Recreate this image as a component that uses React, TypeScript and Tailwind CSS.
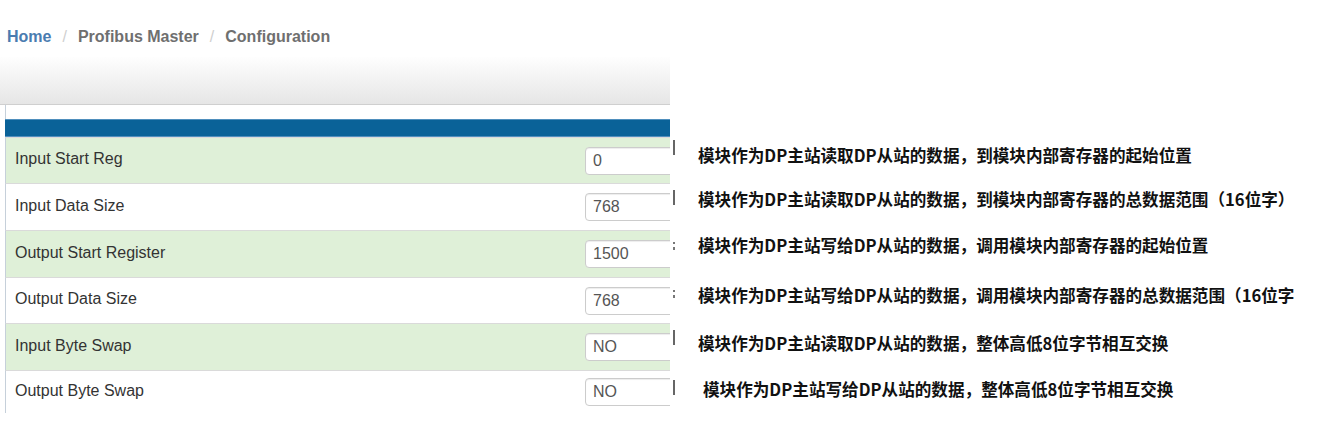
import React from "react";

const rows = [
  { label: "Input Start Reg", value: "0", green: true, h: "h-[46px]", mark: "bar", markTop: "mt-[3px]" },
  { label: "Input Data Size", value: "768", green: false, h: "h-[47px]", mark: "bar", markTop: "mt-[7px]" },
  { label: "Output Start Register", value: "1500", green: true, h: "h-[47px]", mark: "semi", markTop: "mt-[12px]" },
  { label: "Output Data Size", value: "768", green: false, h: "h-[46px]", mark: "semi", markTop: "mt-[13px]" },
  { label: "Input Byte Swap", value: "NO", green: true, h: "h-[47px]", mark: "bar", markTop: "mt-[7px]" },
  { label: "Output Byte Swap", value: "NO", green: false, h: "h-[43px]", mark: "bar", markTop: "mt-[10px]" },
];

const notes = [
  { text: "模块作为DP主站读取DP从站的数据，到模块内部寄存器的起始位置", cls: "mt-[86px] ml-[28px]" },
  { text: "模块作为DP主站读取DP从站的数据，到模块内部寄存器的总数据范围（16位字）", cls: "mt-[20px] ml-[28px]" },
  { text: "模块作为DP主站写给DP从站的数据，调用模块内部寄存器的起始位置", cls: "mt-[22px] ml-[28px]" },
  { text: "模块作为DP主站写给DP从站的数据，调用模块内部寄存器的总数据范围（16位字", cls: "mt-[26px] ml-[28px]" },
  { text: "模块作为DP主站读取DP从站的数据，整体高低8位字节相互交换", cls: "mt-[24px] ml-[28px]" },
  { text: "模块作为DP主站写给DP从站的数据，整体高低8位字节相互交换", cls: "mt-[22px] ml-[33px]" },
];

export default function App() {
  return (
    <div className="w-[1324px] h-[440px] bg-white overflow-hidden font-['Liberation_Sans',Arial,sans-serif]">
      {/* breadcrumb */}
      <div className="h-[57px] pt-[27px] pl-[7px] flex items-start text-[16px] leading-[20px] font-bold">
        <span className="text-[#4a7cb0]">Home</span>
        <span className="text-[#cfcfcf] font-normal mx-[11px]">/</span>
        <span className="text-[#6f6f6f]">Profibus Master</span>
        <span className="text-[#cfcfcf] font-normal mx-[11px]">/</span>
        <span className="text-[#6f6f6f]">Configuration</span>
      </div>

      <div className="flex">
        {/* left panel */}
        <div className="w-[676px] shrink-0">
          <div className="w-[670px] h-[48px] bg-gradient-to-b from-[#fefefe] to-[#e6e6e6] border-b border-[#cfcfcf]" />
          <div className="ml-[5px] w-[665px] h-[14px] border-l border-[#c6d0da] bg-white" />
          <div className="ml-[5px] w-[665px] h-[18px] bg-[#0a6298] border-y border-[#4f8fbd]" />
          {rows.map((r) => (
            <div key={r.label} className={`flex ${r.h}`}>
              <div
                className={`ml-[5px] w-[665px] flex items-center overflow-hidden border-l border-[#c6d0da] border-t border-t-[#dadada] ${
                  r.green ? "bg-[#dff0d8]" : "bg-white"
                }`}
              >
                <div className="w-[579px] shrink-0 pl-[9px] text-[16px] text-[#333] pb-[3px]">{r.label}</div>
                <div className="shrink-0 w-[140px] h-[28px] rounded-[4px] border border-[#cccccc] bg-white pl-[7px] flex items-center text-[16px] text-[#555] shadow-[inset_0_1px_1px_rgba(0,0,0,0.075)]">
                  {r.value}
                </div>
              </div>
              <div className="w-[6px] pl-[3px]">
                {r.mark === "bar" ? (
                  <div className={`w-[2px] h-[15px] bg-[#666] ${r.markTop}`} />
                ) : (
                  <div className={`w-[2px] ${r.markTop} flex flex-col gap-[3px]`}>
                    <div className="w-[2px] h-[2px] bg-[#777]" />
                    <div className="w-[2px] h-[3px] bg-[#777]" />
                  </div>
                )}
              </div>
            </div>
          ))}
        </div>

        {/* annotations */}
        <div className="flex flex-col font-['Noto_Sans_CJK_SC',sans-serif] font-bold text-[16.6px] leading-[24px] text-[#111] -ml-[6px]">
          {notes.map((n) => (
            <div key={n.text} className={`${n.cls} whitespace-nowrap`}>
              {n.text}
            </div>
          ))}
        </div>
      </div>
    </div>
  );
}
